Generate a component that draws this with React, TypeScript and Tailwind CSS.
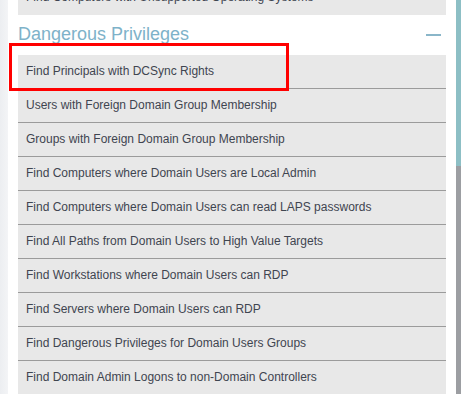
const queries = [
  'Find Principals with DCSync Rights',
  'Users with Foreign Domain Group Membership',
  'Groups with Foreign Domain Group Membership',
  'Find Computers where Domain Users are Local Admin',
  'Find Computers where Domain Users can read LAPS passwords',
  'Find All Paths from Domain Users to High Value Targets',
  'Find Workstations where Domain Users can RDP',
  'Find Servers where Domain Users can RDP',
  'Find Dangerous Privileges for Domain Users Groups',
  'Find Domain Admin Logons to non-Domain Controllers',
];

function QueryRow({ label, last }: { label: string; last?: boolean }) {
  return (
    <div
      className={`h-[34px] flex items-center pl-[8px] pb-[2px] bg-[#e8e8e8] text-[12px] text-[#3f4550] ${
        last ? '' : 'border-b border-[#9b9b9b]'
      }`}
    >
      {label}
    </div>
  );
}

export default function App() {
  return (
    <div
      className="relative w-[461px] h-[394px] overflow-hidden flex bg-white"
      style={{ fontFamily: '"Liberation Sans", Arial, sans-serif' }}
    >
      {/* left shadow strip */}
      <div className="w-[8px] shrink-0 bg-gradient-to-r from-[#eceef1] to-[#f3f4f6]" />

      {/* query panel */}
      <div className="flex-1 px-[10px] -mt-[19px]">
        <QueryRow label="Find Computers with Unsupported Operating Systems" last />

        <div className="h-[40px] flex items-center justify-between">
          <span className="text-[18px] text-[#7eb2c9] pb-[1px]">Dangerous Privileges</span>
          <span className="w-[15px] h-[2px] bg-[#8ab6c9] mr-[5px]" />
        </div>

        <div className="flex flex-col">
          {queries.map((q, i) => (
            <QueryRow key={q} label={q} last={i === queries.length - 1} />
          ))}
        </div>
      </div>

      {/* scrollbar */}
      <div className="w-[5px] shrink-0 flex flex-col">
        <div className="h-[166px] bg-[#8dbfc5]" />
        <div className="flex-1 bg-[#9c9ea2]" />
      </div>

      {/* highlight annotation */}
      <div className="absolute left-[9px] top-[43px] w-[280px] h-[48px] border-[3px] border-[#ff0000]" />
    </div>
  );
}
